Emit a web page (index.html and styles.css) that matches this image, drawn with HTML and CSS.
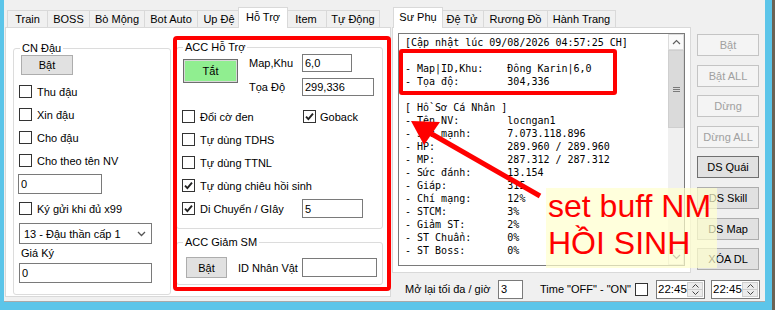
FILE: index.html
```html
<!DOCTYPE html>
<html lang="vi">
<head>
    <meta charset="UTF-8">
    <meta name="viewport" content="width=device-width, initial-scale=1.0">
    <title>Auto - Hỗ Trợ</title>
    <link rel="stylesheet" href="styles.css">
</head>
<body>

<div class="window">
    <!-- left tab control -->
    <div class="tabctl main-tabs">
        <div class="tabs">
            <span class="tab">Train</span>
            <span class="tab">BOSS</span>
            <span class="tab">Bò Mộng</span>
            <span class="tab">Bot Auto</span>
            <span class="tab">Up Đệ</span>
            <span class="tab active">Hỗ Trợ</span>
            <span class="tab">Item</span>
            <span class="tab">Tự Động</span>
        </div>
        <div class="page main-page">
            <fieldset class="group cn-group">
                <legend>CN Đậu</legend>
                <div class="group-body">
                    <button class="btn cn-btn">Bật</button>
                    <label class="check cn-check"><span class="box"></span>Thu đậu</label>
                    <label class="check cn-check"><span class="box"></span>Xin đậu</label>
                    <label class="check cn-check"><span class="box"></span>Cho đậu</label>
                    <label class="check cn-check"><span class="box"></span>Cho theo tên NV</label>
                    <input class="field cn-count" type="text" value="0">
                    <label class="check cn-gui"><span class="box"></span>Ký gửi khi đủ x99</label>
                    <div class="combo">
                        <span>13 - Đậu thần cấp 1</span>
                        <svg width="9" height="6" viewBox="0 0 9 6"><path d="M1 1l3.5 3.5L8 1" stroke="#555" stroke-width="1.3" fill="none"/></svg>
                    </div>
                    <span class="cn-label">Giá Ký</span>
                    <input class="field cn-price" type="text" value="0">
                </div>
            </fieldset>

            <div class="mid">
                <fieldset class="group acc-group">
                    <legend>ACC Hỗ Trợ</legend>
                    <div class="acc-top">
                        <button class="btn btn-green">Tắt</button>
                        <div class="acc-form">
                            <span>Map,Khu</span>
                            <input class="field acc-map" type="text" value="6,0">
                            <span>Tọa Độ</span>
                            <input class="field acc-pos" type="text" value="299,336">
                        </div>
                    </div>
                    <div class="acc-checks">
                        <label class="check"><span class="box"></span>Đổi cờ đen</label>
                        <label class="check goback"><span class="box on"><svg width="11" height="11" viewBox="0 0 11 11"><path d="M2 5.6l2.4 2.5L9 2.6" stroke="#222" stroke-width="1.9" fill="none"/></svg></span>Goback</label>
                        <label class="check wide"><span class="box"></span>Tự dùng TDHS</label>
                        <label class="check wide"><span class="box"></span>Tự dùng TTNL</label>
                        <label class="check wide"><span class="box on"><svg width="11" height="11" viewBox="0 0 11 11"><path d="M2 5.6l2.4 2.5L9 2.6" stroke="#222" stroke-width="1.9" fill="none"/></svg></span>Tự dùng chiêu hồi sinh</label>
                        <label class="check"><span class="box on"><svg width="11" height="11" viewBox="0 0 11 11"><path d="M2 5.6l2.4 2.5L9 2.6" stroke="#222" stroke-width="1.9" fill="none"/></svg></span>Di Chuyển / GIây</label>
                        <input class="field acc-speed" type="text" value="5">
                    </div>
                </fieldset>

                <fieldset class="group sm-group">
                    <legend>ACC Giảm SM</legend>
                    <div class="sm-row">
                        <button class="btn sm-btn">Bật</button>
                        <span class="sm-label">ID Nhân Vật</span>
                        <input class="field sm-id" type="text" value="">
                    </div>
                </fieldset>
            </div>
        </div>
    </div>

    <!-- right side -->
    <div class="side">
        <div class="side-top">
            <div class="tabctl info-tabs">
                <div class="tabs">
                    <span class="tab active">Sư Phụ</span>
                    <span class="tab">Đệ Tử</span>
                    <span class="tab">Rương Đồ</span>
                    <span class="tab">Hành Trang</span>
                </div>
                <div class="page info-page">
                    <div class="textbox">
<pre class="log">[Cập nhật lúc 09/08/2026 04:57:25 CH]

- Map|ID,Khu:    Đông Karin|6,0
- Tọa độ:        304,336

[ Hồ Sơ Cá Nhân ]
- Tên NV:        locngan1
- Sức mạnh:      7.073.118.896
- HP:            289.960 / 289.960
- MP:            287.312 / 287.312
- Sức đánh:      13.154
- Giáp:          315
- Chí mạng:      12%
- STCM:          3%
- Giảm ST:       2%
- ST Chuẩn:      0%
- ST Boss:       0%</pre>
                        <div class="scroll">
                            <div class="scroll-btn">
                                <svg width="9" height="6" viewBox="0 0 9 6"><path d="M1 5l3.5-3.5L8 5" stroke="#606060" stroke-width="1.2" fill="none"/></svg>
                            </div>
                            <div class="scroll-thumb">
                                <svg width="7" height="5" viewBox="0 0 7 5"><path d="M0 .5h7M0 2.5h7M0 4.5h7" stroke="#7a7a7a" stroke-width="1"/></svg>
                            </div>
                            <div class="scroll-track"></div>
                            <div class="scroll-btn">
                                <svg width="9" height="6" viewBox="0 0 9 6"><path d="M1 1l3.5 3.5L8 1" stroke="#606060" stroke-width="1.2" fill="none"/></svg>
                            </div>
                        </div>
                    </div>
                </div>
            </div>

            <div class="actions">
                <button class="btn off">Bật</button>
                <button class="btn off">Bật ALL</button>
                <button class="btn off">Dừng</button>
                <button class="btn off">Dừng ALL</button>
                <button class="btn strong">DS Quái</button>
                <button class="btn">DS Skill</button>
                <button class="btn">DS Map</button>
                <button class="btn">XÓA DL</button>
            </div>
        </div>

        <div class="bottom-row">
            <span class="retry-label">Mở lại tối đa / giờ</span>
            <input class="field retry" type="text" value="3">
            <span class="time-label">Time "OFF" - "ON"</span>
            <span class="box"></span>
            <div class="picker">
                <span>22:45</span>
                <div class="spin">
                    <span><svg width="7" height="4" viewBox="0 0 7 4"><path d="M.5 3.5l3-3 3 3" stroke="#444" fill="none"/></svg></span>
                    <span><svg width="7" height="4" viewBox="0 0 7 4"><path d="M.5 .5l3 3 3-3" stroke="#444" fill="none"/></svg></span>
                </div>
            </div>
            <div class="picker">
                <span>22:45</span>
                <div class="spin">
                    <span><svg width="7" height="4" viewBox="0 0 7 4"><path d="M.5 3.5l3-3 3 3" stroke="#444" fill="none"/></svg></span>
                    <span><svg width="7" height="4" viewBox="0 0 7 4"><path d="M.5 .5l3 3 3-3" stroke="#444" fill="none"/></svg></span>
                </div>
            </div>
        </div>
    </div>
</div>

<!-- annotations drawn over the screenshot -->
<div class="mark mark-mid"></div>
<div class="mark mark-info"></div>
<svg class="arrow" width="775" height="310" viewBox="0 0 775 310">
    <line x1="540" y1="196" x2="430" y2="133" stroke="#f00" stroke-width="5"/>
    <polygon points="411,121 440,122 424,145" fill="#f00"/>
</svg>
<div class="note">set buff NM<br>HỒI SINH</div>

</body>
</html>
```

FILE: styles.css
```css
/* General */
* {
    box-sizing: border-box;
}
body {
    margin: 0;
    width: 775px;
    height: 310px;
    overflow: hidden;
    position: relative;
    background: linear-gradient(to right, #5cc5e9 772px, #6b6355 772px);
    font-family: "Liberation Sans", Arial, sans-serif;
    font-size: 11px;
    color: #000;
}
.window {
    display: flex;
    margin-left: 4px;
    width: 761px;
    height: 302px;
    padding-top: 7px;
    background: #f0f0f0;
    border-bottom: 1px solid #a9a9a9;
}

/* Tabs */
.tabs {
    display: flex;
    align-items: flex-end;
    height: 20px;
    padding-left: 2px;
}
.tab {
    display: flex;
    align-items: center;
    justify-content: center;
    height: 17px;
    margin-left: -1px;
    background: #f0f0f0;
    border: 1px solid #d9d9d9;
    border-bottom: none;
    white-space: nowrap;
}
.tab:first-child {
    margin-left: 0;
}
.tab.active {
    position: relative;
    z-index: 1;
    height: 21px;
    margin: 0 -2px -1px -3px;
    padding-bottom: 3px;
    background: #fff;
}
.tab.active:first-child {
    margin-left: -2px;
}
.main-tabs .tab:nth-child(1) { width: 41px; }
.main-tabs .tab:nth-child(2) { width: 43px; }
.main-tabs .tab:nth-child(3) { width: 56px; }
.main-tabs .tab:nth-child(4) { width: 54px; }
.main-tabs .tab:nth-child(5) { width: 44px; }
.main-tabs .tab:nth-child(6) { width: 50px; }
.main-tabs .tab:nth-child(7) { width: 42px; }
.main-tabs .tab:nth-child(8) { width: 54px; }
.info-tabs .tabs { padding-left: 3px; }
.info-tabs .tab:nth-child(1) { width: 50px; }
.info-tabs .tab:nth-child(2) { width: 44px; }
.info-tabs .tab:nth-child(3) { width: 65px; }
.info-tabs .tab:nth-child(4) { width: 69px; }

.page {
    background: #fff;
    border: 1px solid #d9d9d9;
}

/* Controls */
.btn {
    display: flex;
    align-items: center;
    justify-content: center;
    padding: 0;
    font: inherit;
    color: #000;
    background: #e1e1e1;
    border: 1px solid #adadad;
}
.btn-green {
    width: 55px;
    height: 24px;
    margin: 5px 0 0 1px;
    background: #90ee90;
    border-color: #6e6e6e;
    box-shadow: inset 0 0 0 1px #d8d8d8;
}
.field {
    height: 20px;
    padding: 0 2px;
    font: inherit;
    color: #000;
    background: #fff;
    border: 1px solid #7a7a7a;
    outline: none;
}
.check {
    display: flex;
    align-items: center;
    height: 13px;
    white-space: nowrap;
}
.box {
    display: flex;
    align-items: center;
    justify-content: center;
    flex-shrink: 0;
    width: 13px;
    height: 13px;
    margin-right: 5px;
    background: #fff;
    border: 1px solid #333;
}
.group {
    margin: 0;
    padding: 0 0 0 5px;
    min-width: 0;
    border: 1px solid #dcdcdc;
    border-radius: 3px;
}
.group legend {
    margin-left: 1px;
    padding: 0 2px;
    line-height: 13px;
}

/* Left tab page */
.main-tabs {
    margin-left: 1px;
    width: 386px;
}
.main-page {
    display: flex;
    align-items: flex-start;
    gap: 5px;
    height: 270px;
    padding: 14px 0 0 7px;
}
.cn-group {
    width: 158px;
    height: 253px;
}
.group-body {
    display: flex;
    flex-direction: column;
    align-items: flex-start;
}
.cn-btn {
    width: 52px;
    height: 20px;
    margin-left: 2px;
}
.cn-check {
    margin-top: 10px;
}
.cn-count {
    width: 84px;
    margin: 7px 0 0 -1px;
}
.cn-gui {
    margin-top: 8px;
}
.combo {
    display: flex;
    align-items: center;
    justify-content: space-between;
    width: 133px;
    height: 21px;
    margin-top: 8px;
    padding: 0 5px 0 4px;
    background: #fff;
    border: 1px solid #7a7a7a;
}
.cn-label {
    margin: 3px 0 0 2px;
    line-height: 13px;
}
.cn-price {
    width: 133px;
    margin-top: 3px;
}

.mid {
    display: flex;
    flex-direction: column;
    width: 207px;
    margin-top: -1px;
}
.acc-group {
    height: 188px;
}
.acc-top {
    display: flex;
    height: 42px;
}
.acc-form {
    display: grid;
    grid-template-columns: 53px auto;
    grid-auto-rows: 18px;
    row-gap: 6px;
    align-items: center;
    margin-left: 11px;
}
.acc-map {
    width: 50px;
    height: 18px;
}
.acc-pos {
    width: 72px;
    height: 18px;
}
.acc-checks {
    display: grid;
    grid-template-columns: 121px auto;
    grid-auto-rows: 23px;
    align-items: center;
    margin-top: 9px;
}
.acc-checks .wide {
    grid-column: span 2;
}
.goback .box {
    margin-right: 4px;
}
.acc-speed {
    width: 61px;
    height: 19px;
    margin-left: -1px;
}
.sm-group {
    height: 49px;
    margin-top: 7px;
}
.sm-row {
    display: flex;
    align-items: center;
    height: 21px;
    margin-top: 8px;
}
.sm-btn {
    width: 41px;
    height: 21px;
    margin-left: 4px;
}
.sm-label {
    width: 64px;
    margin-left: 11px;
}
.sm-id {
    width: 75px;
    height: 19px;
}

/* Right side */
.side {
    display: flex;
    flex-direction: column;
    width: 373px;
    margin-left: 1px;
}
.side-top {
    display: flex;
    height: 266px;
}
.info-tabs {
    width: 299px;
}
.info-page {
    height: 246px;
    padding: 5px;
}
.textbox {
    display: flex;
    width: 287px;
    height: 233px;
    background: #fff;
    border: 1px solid #7a7a7a;
}
.log {
    flex: 1;
    margin: 0;
    padding: 2px 0 0 6px;
    overflow: hidden;
    font-family: "DejaVu Sans Mono", "Liberation Mono", monospace;
    font-size: 10px;
    line-height: 13px;
}
.scroll {
    display: flex;
    flex-direction: column;
    width: 16px;
    background: #f0f0f0;
}
.scroll-btn {
    display: flex;
    align-items: center;
    justify-content: center;
    height: 16px;
    background: #fafafa;
    border: 1px solid #dcdcdc;
}
.scroll-thumb {
    display: flex;
    align-items: center;
    justify-content: center;
    height: 78px;
    background: #dadada;
    border: 1px solid #cfcfcf;
}
.scroll-track {
    flex: 1;
}

.actions {
    display: flex;
    flex-direction: column;
    gap: 8.6px;
    margin: 27px 0 0 6px;
}
.actions .btn {
    width: 62px;
    height: 22px;
}
.actions .off {
    color: #a0a0a0;
    background: #f4f4f4;
    border-color: #c4c4c4;
}
.actions .strong {
    border-color: #707070;
}

.bottom-row {
    display: flex;
    align-items: center;
    height: 20px;
    margin-top: 6px;
    padding-left: 13px;
    white-space: nowrap;
}
.retry-label {
    width: 93px;
}
.retry {
    width: 25px;
    height: 19px;
}
.time-label {
    width: 95px;
    margin-left: 17px;
}
.bottom-row .box {
    margin-right: 0;
}
.picker {
    display: flex;
    align-items: center;
    width: 49px;
    height: 19px;
    margin-left: 8px;
    padding: 0 1px;
    font-size: 11.5px;
    background: #fff;
    border: 1px solid #7a7a7a;
}
.picker + .picker {
    margin-left: 6px;
}
.spin {
    display: flex;
    flex-direction: column;
    width: 16px;
    height: 15px;
    margin-left: auto;
    background: #ececec;
    border: 1px solid #cfcfcf;
}
.spin span {
    display: flex;
    flex: 1;
    align-items: center;
    justify-content: center;
}
.spin span + span {
    border-top: 1px solid #cfcfcf;
}

/* Annotations */
.mark {
    position: absolute;
    border: 4px solid #f00;
    border-radius: 4px;
}
.mark-mid {
    left: 173px;
    top: 36px;
    width: 218px;
    height: 255px;
}
.mark-info {
    left: 399px;
    top: 49px;
    width: 218px;
    height: 46px;
    border-radius: 3px;
}
.arrow {
    position: absolute;
    left: 0;
    top: 0;
}
.note {
    position: absolute;
    left: 546px;
    top: 188px;
    width: 171px;
    height: 80px;
    padding-left: 2px;
    color: #f00;
    font-size: 32px;
    line-height: 37px;
    white-space: nowrap;
    background: rgba(255, 255, 205, 0.7);
}
```
